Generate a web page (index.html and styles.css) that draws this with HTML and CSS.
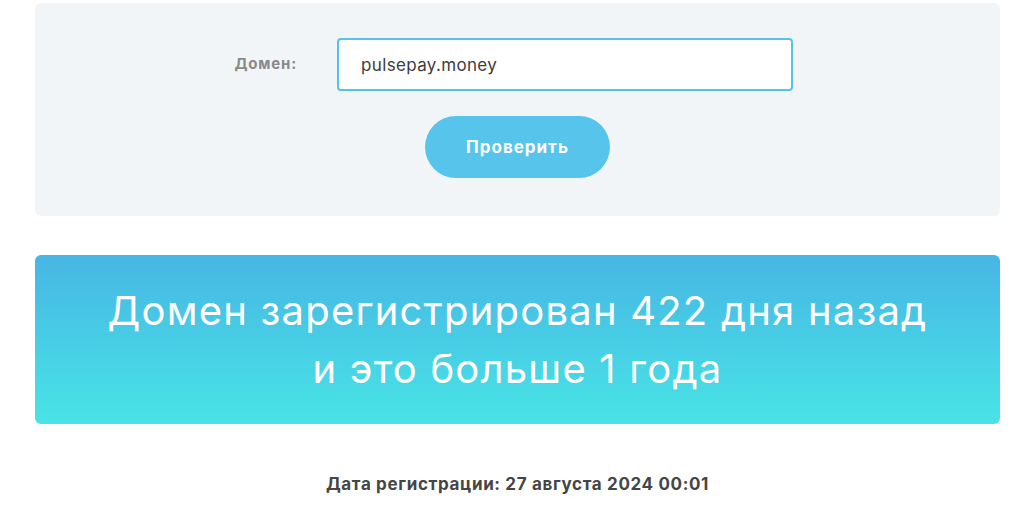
FILE: index.html
```html
<!DOCTYPE html>
<html lang="ru">
<head>
  <meta charset="UTF-8">
  <meta name="viewport" content="width=device-width, initial-scale=1.0">
  <title>Проверка возраста домена</title>
  <link rel="stylesheet" href="styles.css">
</head>
<body>
  <div class="page">
    <form class="check-form" id="checkForm">
      <div class="form-row">
        <label for="domain">Домен:</label>
        <input type="text" id="domain" name="domain" value="pulsepay.money">
      </div>
      <button type="button" id="checkButton">Проверить</button>
    </form>

    <div class="result">
      <p>Домен зарегистрирован 422 дня назад<br>и это больше 1 года</p>
    </div>

    <div class="reg-date">Дата регистрации: 27 августа 2024 00:01</div>
  </div>
</body>
</html>
```

FILE: styles.css
```css
body {
  margin: 0;
  font-family: Inter, "Noto Sans", sans-serif;
  background: #fff;
}

.page {
  width: 965px;
  margin: 3px 0 0 35px;
}

.check-form {
  background-color: #f2f5f7;
  border-radius: 6px;
  padding: 35px 0 38px;
  display: flex;
  flex-direction: column;
  align-items: center;
}

.form-row {
  align-self: stretch;
  display: grid;
  grid-template-columns: 262px 456px;
  column-gap: 40px;
  align-items: center;
}

.form-row label {
  text-align: right;
  font-size: 15px;
  font-weight: 700;
  letter-spacing: 0.8px;
  color: #8a8a8a;
  padding-bottom: 2px;
}

.form-row input {
  height: 53px;
  box-sizing: border-box;
  padding: 0 22px;
  border: 2px solid #55c3ea;
  border-radius: 4px;
  background: #fff;
  font-family: inherit;
  font-size: 17px;
  letter-spacing: 0.35px;
  color: #3c3c3c;
  outline: none;
}

button {
  margin-top: 25px;
  width: 185px;
  height: 62px;
  border: none;
  border-radius: 31px;
  background-color: #56c4eb;
  color: #fff;
  font-family: inherit;
  font-size: 17px;
  font-weight: 700;
  letter-spacing: 1px;
  cursor: pointer;
}

.result {
  margin-top: 39px;
  height: 169px;
  border-radius: 6px;
  background: linear-gradient(to bottom, #47b6e4, #48e4e6);
  display: flex;
  align-items: center;
  justify-content: center;
}

.result p {
  margin: 0;
  text-align: center;
  color: #fff;
  font-size: 40px;
  font-weight: 400;
  line-height: 58px;
  letter-spacing: 1.2px;
}

.reg-date {
  margin-top: 50px;
  text-align: center;
  font-size: 17px;
  font-weight: 700;
  letter-spacing: 0.65px;
  color: #454545;
}
```
